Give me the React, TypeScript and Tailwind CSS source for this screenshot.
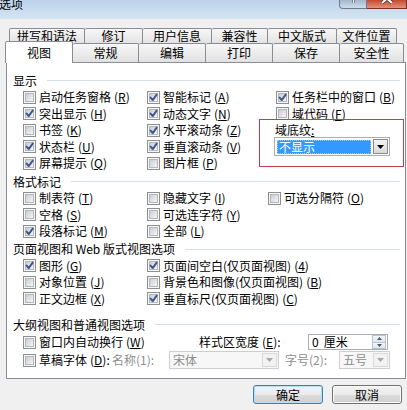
import React from "react";

function Box({ checked }: { checked?: boolean }) {
  return (
    <span className="relative inline-flex h-[13px] w-[13px] shrink-0 border border-[#8e8f8f] bg-[#f6f6f6] p-[1px]">
      <span className="block h-full w-full border border-[#b4b8be] bg-linear-to-br from-[#c9cdd3] to-[#f5f6f7]" />
      {checked && (
        <svg className="absolute left-[0px] top-[0px]" width="11" height="11" viewBox="0 0 11 11">
          <path d="M2.6 5.6 L4.7 8.1 L8.7 2.6" fill="none" stroke="#3f5689" strokeWidth="1.9" strokeLinecap="round" strokeLinejoin="round" />
        </svg>
      )}
    </span>
  );
}

function Mn({ k }: { k: string }) {
  return (
    <span className="ml-[3px]">
      (<span className="underline underline-offset-[1px]">{k}</span>)
    </span>
  );
}

function Item({ checked, text, k }: { checked?: boolean; text: string; k: string }) {
  return (
    <div className="flex h-full items-center">
      <Box checked={checked} />
      <span className="ml-[3px] whitespace-nowrap">
        {text}
        <Mn k={k} />
      </span>
    </div>
  );
}

function Header({ title, cls }: { title: string; cls: string }) {
  return (
    <div className={cls}>
      <span className="whitespace-nowrap">{title}</span>
      <span className="ml-[10px] h-px flex-1 bg-[#d5dfe5]" />
    </div>
  );
}

function Arrow({ color }: { color: string }) {
  return (
    <svg width="7" height="4" viewBox="0 0 7 4">
      <path d="M0 0 H7 L3.5 4 Z" fill={color} />
    </svg>
  );
}

const row1 = [
  { t: "拼写和语法", w: "w-[76px] border-l" },
  { t: "修订", w: "w-[58px]" },
  { t: "用户信息", w: "w-[69px]" },
  { t: "兼容性", w: "w-[56px]" },
  { t: "中文版式", w: "w-[69px]" },
  { t: "文件位置", w: "w-[60px]" },
];

const row2 = [
  { t: "常规", w: "w-[66px]" },
  { t: "编辑", w: "w-[67px]" },
  { t: "打印", w: "w-[67px]" },
  { t: "保存", w: "w-[67px]" },
  { t: "安全性", w: "w-[64px]" },
];

export default function App() {
  return (
    <div className="h-[410px] w-[407px] overflow-hidden bg-[#f0f0f0] text-[12px] leading-[16px] text-black font-[family-name:'Noto_Sans_CJK_SC','Noto_Sans',sans-serif]">
      {/* title bar */}
      <div className="flex h-[19px] items-start justify-between bg-linear-to-b from-[#bcd3eb] to-[#d6e4f2]">
        <span className="-ml-[1px] -mt-[3px] leading-[14px]">选项</span>
        <div className="flex">
          <div className="h-[9px] w-[28px] overflow-hidden rounded-bl-[4px] border border-t-0 border-[#6c7c90] bg-linear-to-b from-[#a3b6cd] to-[#d0dce9]">
            <svg width="28" height="9" viewBox="0 0 28 9">
              <path d="M13.5 0 V3" stroke="#3b4a5c" strokeWidth="2.6" />
              <path d="M13.5 0 V3" stroke="#ffffff" strokeWidth="1.4" />
            </svg>
          </div>
          <div className="h-[9px] w-[40px] overflow-hidden border border-t-0 border-l-0 border-[#7a3026] bg-linear-to-b from-[#c4472f] to-[#e3917c]">
            <svg width="40" height="9" viewBox="0 0 40 9">
              <path d="M15 -6 L25 3 M25 -6 L15 3" stroke="#5a1d14" strokeWidth="3.6" />
              <path d="M15 -6 L25 3 M25 -6 L15 3" stroke="#ffffff" strokeWidth="2.2" />
            </svg>
          </div>
        </div>
      </div>

      <div className="pt-[9px]">
        {/* tab row 1 */}
        <div className="flex h-[15px] pl-[9px]">
          {row1.map((t) => (
            <div
              key={t.t}
              className={`flex items-center justify-center rounded-t-[2px] border-t border-r border-[#898c95] bg-linear-to-b from-[#f7f7f7] to-[#e3e3e3] ${t.w}`}
            >
              {t.t}
            </div>
          ))}
        </div>
        {/* tab row 2 */}
        <div className="relative z-10 flex h-[19px] items-end pl-[5px]">
          <div className="mb-[-1px] flex h-[22px] w-[68px] items-start justify-center rounded-t-[2px] border border-b-0 border-[#898c95] bg-white pt-[3px]">
            视图
          </div>
          {row2.map((t) => (
            <div
              key={t.t}
              className={`flex h-[19px] items-center justify-center rounded-t-[2px] border-t border-r border-[#898c95] bg-linear-to-b from-[#f7f7f7] to-[#e1e1e1] ${t.w}`}
            >
              {t.t}
            </div>
          ))}
        </div>

        {/* panel */}
        <div className="relative ml-[6px] h-[317px] w-[400px] border border-[#898c95] bg-white pt-[9px]">
          <Header title="显示" cls="flex h-[17px] items-center pl-[6px] pr-[5px]" />
          <div className="grid auto-rows-[16.5px] grid-cols-[124px_129px_1fr] pl-[16px]">
            <Item text="启动任务窗格" k="R" />
            <Item checked text="智能标记" k="A" />
            <Item checked text="任务栏中的窗口" k="B" />
            <Item checked text="突出显示" k="H" />
            <Item checked text="动态文字" k="N" />
            <Item text="域代码" k="F" />
            <Item text="书签" k="K" />
            <Item checked text="水平滚动条" k="Z" />
            <div className="-ml-[1px] flex h-full items-center">
              域底纹<span className="underline underline-offset-[1px]">:</span>
            </div>
            <Item checked text="状态栏" k="U" />
            <Item checked text="垂直滚动条" k="V" />
            <div className="flex h-full items-center">
              <div className="-ml-[2px] flex h-[19px] w-[116px] items-center border border-[#abadb3] bg-white">
                <div className="ml-[2px] flex h-[14px] flex-1 items-center border border-dotted border-[#9cc8ff] bg-[#3399ff] pl-[1px] text-white">
                  不显示
                </div>
                <div className="ml-[2px] mr-[1px] flex h-[15px] w-[15px] items-center justify-center border border-[#8a8a8a] bg-linear-to-b from-[#f4f4f4] to-[#d9d9d9]">
                  <Arrow color="#000000" />
                </div>
              </div>
            </div>
            <Item checked text="屏幕提示" k="Q" />
            <Item text="图片框" k="P" />
          </div>

          <Header title="格式标记" cls="mt-[1.5px] flex h-[17px] items-center pl-[6px] pr-[5px]" />
          <div className="grid auto-rows-[16.5px] grid-cols-[124px_121px_1fr] pl-[16px]">
            <Item text="制表符" k="T" />
            <Item text="隐藏文字" k="I" />
            <Item text="可选分隔符" k="O" />
            <Item text="空格" k="S" />
            <Item text="可选连字符" k="Y" />
            <div />
            <Item checked text="段落标记" k="M" />
            <Item text="全部" k="L" />
          </div>

          <Header title="页面视图和 Web 版式视图选项" cls="mt-[1px] flex h-[17px] items-center pl-[6px] pr-[5px]" />
          <div className="grid auto-rows-[16.5px] grid-cols-[124px_1fr] pl-[16px]">
            <Item checked text="图形" k="G" />
            <Item checked text="页面间空白(仅页面视图)" k="4" />
            <Item text="对象位置" k="J" />
            <Item text="背景色和图像(仅页面视图)" k="B" />
            <Item text="正文边框" k="X" />
            <Item checked text="垂直标尺(仅页面视图)" k="C" />
          </div>

          <Header title="大纲视图和普通视图选项" cls="mt-[10.5px] flex h-[14px] items-center pl-[6px] pr-[5px] leading-[14px]" />
          <div className="mt-[1.5px] flex h-[18px] items-center pl-[16px] leading-[14px]">
            <Box />
            <span className="ml-[3px] w-[160px] whitespace-nowrap">
              窗口内自动换行
              <Mn k="W" />
            </span>
            <span className="w-[109px] whitespace-nowrap">
              样式区宽度<Mn k="E" />:
            </span>
            <div className="flex h-[16px] w-[80px] items-center border border-[#abadb3] bg-white">
              <span className="flex-1 pl-[3px] leading-[14px]">
                0<span className="ml-[5px]">厘米</span>
              </span>
              <div className="mr-[1px] flex h-[14px] w-[14px] flex-col">
                <div className="flex flex-1 items-center justify-center border border-[#b7c3d1] bg-linear-to-b from-[#f3f6f9] to-[#dfe6ee]">
                  <svg width="5" height="3" viewBox="0 0 5 3">
                    <path d="M0 3 H5 L2.5 0 Z" fill="#4d5a6a" />
                  </svg>
                </div>
                <div className="flex flex-1 items-center justify-center border border-t-0 border-[#b7c3d1] bg-linear-to-b from-[#f3f6f9] to-[#dfe6ee]">
                  <svg width="5" height="3" viewBox="0 0 5 3">
                    <path d="M0 0 H5 L2.5 3 Z" fill="#4d5a6a" />
                  </svg>
                </div>
              </div>
            </div>
          </div>
          <div className="flex h-[18px] items-center pl-[16px]">
            <Box />
            <span className="ml-[3px] w-[73px] whitespace-nowrap">
              草稿字体<Mn k="D" />:
            </span>
            <span className="w-[57px] whitespace-nowrap text-[#8d8d8d]">名称(1):</span>
            <div className="flex h-[18px] w-[110px] items-center border border-[#ccced3] bg-[#f7f7f7]">
              <span className="flex-1 pl-[3px] text-[#8d8d8d]">宋体</span>
              <div className="mr-[1px] flex h-[14px] w-[15px] items-center justify-center border border-[#dadada] bg-[#f2f2f2]">
                <Arrow color="#a8a8a8" />
              </div>
            </div>
            <span className="ml-[6px] w-[54px] whitespace-nowrap text-[#8d8d8d]">字号(2):</span>
            <div className="flex h-[18px] w-[51px] items-center border border-[#ccced3] bg-[#f7f7f7]">
              <span className="flex-1 pl-[3px] text-[#8d8d8d]">五号</span>
              <div className="mr-[1px] flex h-[14px] w-[15px] items-center justify-center border border-[#dadada] bg-[#f2f2f2]">
                <Arrow color="#a8a8a8" />
              </div>
            </div>
          </div>

          {/* red annotation box */}
          <div className="pointer-events-none absolute left-[252px] top-[56px] h-[48px] w-[145px] border border-[#c0404a]" />
        </div>

        {/* buttons */}
        <div className="flex justify-end gap-[9px] pr-[5px] pt-[6px]">
          <div className="flex h-[19px] w-[70px] items-center justify-center rounded-[3px] border border-[#3c7fb1] bg-[linear-gradient(#f2f2f2,#ebebeb_50%,#dddddd_50%,#cfcfcf)] shadow-[inset_0_0_0_1px_#b7e0f7]">
            确定
          </div>
          <div className="flex h-[19px] w-[70px] items-center justify-center rounded-[3px] border border-[#707070] bg-[linear-gradient(#f2f2f2,#ebebeb_50%,#dddddd_50%,#cfcfcf)] shadow-[inset_0_0_0_1px_#fcfcfc]">
            取消
          </div>
        </div>
      </div>
    </div>
  );
}
